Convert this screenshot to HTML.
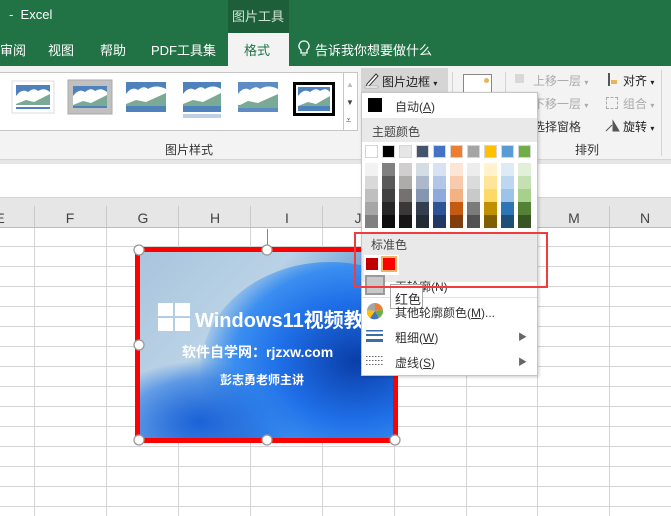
<!DOCTYPE html>
<html><head><meta charset="utf-8"><style>
*{margin:0;padding:0;box-sizing:border-box}
body{width:671px;height:516px;overflow:hidden;position:relative;background:#fff;font-family:"Liberation Sans","Noto Sans CJK SC",sans-serif;font-size:12px;color:#333}
.a{position:absolute}
.t{position:absolute;white-space:nowrap}
</style></head><body>
<div class="a" style="left:0;top:0;width:671px;height:66px;background:#217346"></div>
<div class="a" style="left:228px;top:0;width:61px;height:33px;background:#1d5f39"></div>
<div class="t" style="left:9px;top:7px;color:#fff;font-size:13px">-&nbsp; Excel</div>
<div class="t" style="left:232px;top:6px;color:#cfe3d6;font-size:13px">图片工具</div>
<div class="a" style="left:228px;top:33px;width:61px;height:33px;background:#f3f3f3"></div>
<div class="t" style="left:0;top:40px;color:#fff;font-size:13px">审阅</div>
<div class="t" style="left:48px;top:40px;color:#fff;font-size:13px">视图</div>
<div class="t" style="left:100px;top:40px;color:#fff;font-size:13px">帮助</div>
<div class="t" style="left:151px;top:40px;color:#fff;font-size:13px">PDF工具集</div>
<div class="t" style="left:244px;top:40px;color:#217346;font-size:13px">格式</div>
<svg class="a" style="left:298px;top:40px" width="12" height="18"><path d="M6 1a5 5 0 0 0-3 9v3h6v-3a5 5 0 0 0-3-9z" fill="none" stroke="#fff" stroke-width="1.3"/><path d="M4 15h4" stroke="#fff"/></svg>
<div class="t" style="left:315px;top:40px;color:#fff;font-size:13px">告诉我你想要做什么</div>
<div class="a" style="left:0;top:66px;width:671px;height:94px;background:#f3f3f3"></div>
<div class="a" style="left:0;top:72px;width:344px;height:59px;background:#fff;border:1px solid #c6c6c6;border-left:none"></div>
<div class="a" style="left:343px;top:72px;width:15px;height:59px;background:#fff;border:1px solid #c6c6c6"></div>
<div class="t" style="left:346px;top:80px;font-size:8px;color:#bbb">▲</div>
<div class="t" style="left:346px;top:98px;font-size:8px;color:#444">▼</div>
<div class="t" style="left:346px;top:115px;font-size:9px;color:#444">⩡</div>
<svg class="a" style="left:0;top:72px" width="343" height="58">
<g transform="translate(13,10)"><rect x="-1" y="-1" width="42" height="32" fill="#fff" stroke="#ddd"/><rect x="3" y="3" width="34" height="20" fill="#4f81bd"/><path d="M3 14q6-8 12-4q6-5 10-1q6-4 12 1v13H3z" fill="#fff"/><path d="M3 22l10-4 8 2 16-8v11H3z" fill="#7aa995"/><rect x="3" y="25" width="34" height="2" fill="#4f81bd"/></g>
<g transform="translate(70,10)"><rect x="-2" y="-2" width="44" height="34" fill="#c0c0c0" stroke="#aaa"/><rect x="3" y="4" width="34" height="20" fill="#4f81bd"/><path d="M3 14q6-8 12-4q6-5 10-1q6-4 12 1v13H3z" fill="#fff"/><path d="M3 23l10-4 8 2 16-8v11H3z" fill="#7aa995"/><rect x="3" y="24" width="34" height="2" fill="#4f81bd"/></g>
<g transform="translate(126,10)"><rect x="0" y="0" width="40" height="30" fill="#4f81bd"/><path d="M0 12q6-8 12-4q6-5 10-1q8-5 18 0v16H0z" fill="#fff"/><path d="M0 22l10-4 10 2 20-9v13H0z" fill="#7aa995"/></g>
<g transform="translate(183,10)"><rect x="0" y="0" width="38" height="30" fill="#4f81bd"/><path d="M0 12q6-8 12-4q6-5 10-1q8-5 16 0v16H0z" fill="#fff"/><path d="M0 22l10-4 10 2 18-9v13H0z" fill="#7aa995"/><rect x="0" y="32" width="38" height="4" fill="#bfd0e6"/></g>
<g transform="translate(238,10)"><rect x="0" y="0" width="40" height="30" fill="#5d8cc4"/><path d="M0 12q6-8 12-4q6-5 10-1q8-5 18 0v16H0z" fill="#fff"/><path d="M0 24l10-5 10 2 20-9v14H0z" fill="#7aa995"/><rect x="0" y="27" width="40" height="3" fill="#5d8cc4"/></g>
<g transform="translate(293,10)"><rect x="0" y="0" width="42" height="34" fill="#000"/><rect x="3" y="3" width="36" height="28" fill="#fff"/><rect x="5" y="5" width="32" height="24" fill="#4f81bd"/><path d="M5 14q6-8 12-4q6-5 10-1q6-4 10 1v14H5z" fill="#fff"/><path d="M5 24l10-4 8 2 14-8v10H5z" fill="#7aa995"/></g>
</svg>
<div class="t" style="left:165px;top:141px">图片样式</div>
<div class="a" style="left:0;top:159px;width:671px;height:1px;background:#d4d4d4"></div>
<div class="a" style="left:361px;top:68px;width:87px;height:24px;background:#d5d5d5"></div>
<svg class="a" style="left:364px;top:71px" width="16" height="18"><path d="M3 13l9-10 2 2-9 10-3 1z" fill="#fff" stroke="#333"/><rect x="1" y="15" width="13" height="2" fill="#fff" stroke="#888" stroke-width=".5"/></svg>
<div class="t" style="left:382px;top:73px;color:#222">图片边框 <span style="font-size:8px">▾</span></div>
<div class="a" style="left:452px;top:72px;width:1px;height:80px;background:#d4d4d4"></div>
<div class="a" style="left:463px;top:74px;width:29px;height:28px;background:#fff;border:1px solid #888"></div>
<div class="a" style="left:484px;top:78px;width:5px;height:5px;border-radius:50%;background:#e8b55c"></div>
<div class="a" style="left:505px;top:72px;width:1px;height:80px;background:#d4d4d4"></div>
<div class="a" style="left:515px;top:74px;width:9px;height:9px;background:#d8d8d8"></div>
<div class="t" style="left:533px;top:72px;color:#aaa">上移一层 <span style="font-size:8px">▾</span></div>
<div class="t" style="left:533px;top:95px;color:#aaa">下移一层 <span style="font-size:8px">▾</span></div>
<div class="t" style="left:533px;top:118px;color:#333">选择窗格</div>
<div class="a" style="left:608px;top:73px;width:2px;height:13px;background:#555"></div>
<div class="a" style="left:611px;top:80px;width:6px;height:4px;background:#e8b55c"></div>
<div class="t" style="left:623px;top:72px;color:#222">对齐 <span style="font-size:8px">▾</span></div>
<div class="a" style="left:606px;top:97px;width:12px;height:12px;border:1px dashed #aaa"></div>
<div class="t" style="left:623px;top:95px;color:#aaa">组合 <span style="font-size:8px">▾</span></div>
<svg class="a" style="left:604px;top:118px" width="16" height="14"><path d="M2 13l6-6M9 3l6 10H9z" fill="#555" stroke="#555"/></svg>
<div class="t" style="left:623px;top:118px;color:#222">旋转 <span style="font-size:8px">▾</span></div>
<div class="t" style="left:575px;top:141px">排列</div>
<div class="a" style="left:661px;top:70px;width:1px;height:86px;background:#d4d4d4"></div>
<div class="a" style="left:0;top:160px;width:671px;height:4px;background:#e6e6e6"></div>
<div class="a" style="left:0;top:197px;width:671px;height:1px;background:#d4d4d4"></div>
<svg class="a" style="left:0;top:198px" width="671" height="318">
<g stroke="#d4d4d4"><path d="M34.5 0v318M106.5 0v318M178.5 0v318M250.5 0v318M322.5 0v318M394.5 0v318M466.5 0v318M537.5 0v318M609.5 0v318"/>
<path d="M0 48.5h671M0 68.5h671M0 88.5h671M0 108.5h671M0 128.5h671M0 148.5h671M0 168.5h671M0 188.5h671M0 208.5h671M0 228.5h671M0 248.5h671M0 268.5h671M0 288.5h671M0 308.5h671"/></g>
<rect x="0" y="0" width="671" height="29" fill="#e6e6e6"/>
<path d="M0 29.5h671" stroke="#bbb"/>
<g stroke="#c8c8c8"><path d="M34.5 8v21M106.5 8v21M178.5 8v21M250.5 8v21M322.5 8v21M394.5 8v21M466.5 8v21M537.5 8v21M609.5 8v21"/></g>
<g font-size="14" fill="#444" text-anchor="middle" font-family="Liberation Sans"><text x="0" y="25">E</text><text x="70" y="25">F</text><text x="143" y="25">G</text><text x="215" y="25">H</text><text x="287" y="25">I</text><text x="358" y="25">J</text><text x="574" y="25">M</text><text x="645" y="25">N</text></g>
</svg>
<div class="a" style="left:267px;top:229px;width:1px;height:18px;background:#888"></div>
<div class="a" style="left:135px;top:247px;width:263px;height:196px;background:#ff0000"></div>
<div class="a" style="left:140px;top:252px;width:253px;height:186px;overflow:hidden;background:linear-gradient(135deg,#a9c4dc 0%,#b9d2e6 35%,#6fa4d8 55%,#1d5fc8 80%,#0b3c98 100%)">
<div class="a" style="left:60px;top:10px;width:260px;height:220px;border-radius:50%;background:radial-gradient(ellipse at 60% 45%,#0a3ea8 0%,#1f6fe8 35%,#3a8ef0 55%,rgba(60,140,240,0) 72%)"></div>
<div class="a" style="left:-40px;top:110px;width:200px;height:120px;border-radius:50%;background:radial-gradient(ellipse,#1b62d8 0%,rgba(40,120,230,.6) 50%,rgba(40,120,230,0) 72%)"></div>
<svg class="a" style="left:18px;top:51px" width="34" height="30"><rect x="0" y="0" width="15" height="13" fill="#fff"/><rect x="17" y="0" width="15" height="13" fill="#fff"/><rect x="0" y="15" width="15" height="13" fill="#fff"/><rect x="17" y="15" width="15" height="13" fill="#fff"/></svg>
<div class="t" style="left:55px;top:52px;color:#fff;font-size:20px;font-weight:bold">Windows11视频教</div>
<div class="t" style="left:42px;top:90px;color:#fff;font-size:14px;font-weight:bold">软件自学网：rjzxw.com</div>
<div class="t" style="left:80px;top:119px;color:#fff;font-size:12px;font-weight:bold">彭志勇老师主讲</div>
</div>
<svg class="a" style="left:128px;top:240px" width="280" height="210"><g fill="#fff" stroke="#999" stroke-width="1.3"><circle cx="11" cy="10" r="5"/><circle cx="139" cy="10" r="5"/><circle cx="11" cy="105" r="5"/><circle cx="11" cy="200" r="5"/><circle cx="139" cy="200" r="5"/><circle cx="267" cy="200" r="5"/></g></svg>
<div class="a" style="left:361px;top:92px;width:177px;height:284px;background:#fff;border:1px solid #c6c6c6;box-shadow:1px 1px 3px rgba(0,0,0,.2)"></div>
<div class="a" style="left:368px;top:98px;width:14px;height:14px;background:#000"></div>
<div class="t" style="left:395px;top:98px;color:#333">自动(<u>A</u>)</div>
<div class="a" style="left:362px;top:118px;width:175px;height:24px;background:#e9e9e9"></div>
<div class="t" style="left:372px;top:123px;color:#444">主题颜色</div>
<svg class="a" style="left:364px;top:144px" width="172" height="86" shape-rendering="crispEdges">
<g stroke="#d6d6d6" stroke-width="1">
<rect x="1.5" y="1.5" width="12" height="12" fill="#fff"/><rect x="18.5" y="1.5" width="12" height="12" fill="#000"/><rect x="35.5" y="1.5" width="12" height="12" fill="#e7e6e6"/><rect x="52.5" y="1.5" width="12" height="12" fill="#44546a"/><rect x="69.5" y="1.5" width="12" height="12" fill="#4472c4"/><rect x="86.5" y="1.5" width="12" height="12" fill="#ed7d31"/><rect x="103.5" y="1.5" width="12" height="12" fill="#a5a5a5"/><rect x="120.5" y="1.5" width="12" height="12" fill="#ffc000"/><rect x="137.5" y="1.5" width="12" height="12" fill="#5b9bd5"/><rect x="154.5" y="1.5" width="12" height="12" fill="#70ad47"/>
</g>
<g>
<g transform="translate(1,19)"><rect width="13" height="13" fill="#f2f2f2"/><rect y="13" width="13" height="13" fill="#d9d9d9"/><rect y="26" width="13" height="13" fill="#bfbfbf"/><rect y="39" width="13" height="13" fill="#a6a6a6"/><rect y="52" width="13" height="13" fill="#808080"/></g>
<g transform="translate(18,19)"><rect width="13" height="13" fill="#808080"/><rect y="13" width="13" height="13" fill="#595959"/><rect y="26" width="13" height="13" fill="#404040"/><rect y="39" width="13" height="13" fill="#262626"/><rect y="52" width="13" height="13" fill="#0d0d0d"/></g>
<g transform="translate(35,19)"><rect width="13" height="13" fill="#d0cece"/><rect y="13" width="13" height="13" fill="#aeabab"/><rect y="26" width="13" height="13" fill="#757171"/><rect y="39" width="13" height="13" fill="#3a3838"/><rect y="52" width="13" height="13" fill="#171616"/></g>
<g transform="translate(52,19)"><rect width="13" height="13" fill="#d6dce4"/><rect y="13" width="13" height="13" fill="#adb9ca"/><rect y="26" width="13" height="13" fill="#8496b0"/><rect y="39" width="13" height="13" fill="#333f4f"/><rect y="52" width="13" height="13" fill="#222a35"/></g>
<g transform="translate(69,19)"><rect width="13" height="13" fill="#d9e2f3"/><rect y="13" width="13" height="13" fill="#b4c6e7"/><rect y="26" width="13" height="13" fill="#8eaadb"/><rect y="39" width="13" height="13" fill="#2f5496"/><rect y="52" width="13" height="13" fill="#1f3864"/></g>
<g transform="translate(86,19)"><rect width="13" height="13" fill="#fbe5d5"/><rect y="13" width="13" height="13" fill="#f7cbac"/><rect y="26" width="13" height="13" fill="#f4b183"/><rect y="39" width="13" height="13" fill="#c55a11"/><rect y="52" width="13" height="13" fill="#833c0b"/></g>
<g transform="translate(103,19)"><rect width="13" height="13" fill="#ededed"/><rect y="13" width="13" height="13" fill="#dbdbdb"/><rect y="26" width="13" height="13" fill="#c9c9c9"/><rect y="39" width="13" height="13" fill="#7b7b7b"/><rect y="52" width="13" height="13" fill="#525252"/></g>
<g transform="translate(120,19)"><rect width="13" height="13" fill="#fff2cc"/><rect y="13" width="13" height="13" fill="#fee599"/><rect y="26" width="13" height="13" fill="#ffd966"/><rect y="39" width="13" height="13" fill="#bf9000"/><rect y="52" width="13" height="13" fill="#7f6000"/></g>
<g transform="translate(137,19)"><rect width="13" height="13" fill="#deebf6"/><rect y="13" width="13" height="13" fill="#bdd7ee"/><rect y="26" width="13" height="13" fill="#9dc3e6"/><rect y="39" width="13" height="13" fill="#2e75b5"/><rect y="52" width="13" height="13" fill="#1f4e79"/></g>
<g transform="translate(154,19)"><rect width="13" height="13" fill="#e2efd9"/><rect y="13" width="13" height="13" fill="#c5e0b3"/><rect y="26" width="13" height="13" fill="#a8d08d"/><rect y="39" width="13" height="13" fill="#538135"/><rect y="52" width="13" height="13" fill="#375623"/></g>
</g></svg>
<div class="a" style="left:362px;top:233px;width:175px;height:49px;background:#e9e9e9"></div>
<div class="t" style="left:371px;top:236px;color:#444">标准色</div>
<div class="a" style="left:364px;top:255px;width:35px;height:20px;background:#fff"></div>
<div class="a" style="left:366px;top:258px;width:12px;height:12px;background:#c00000"></div>
<div class="a" style="left:381px;top:256px;width:16px;height:16px;background:#ff0000;border:2px solid #f4b26a"></div>
<div class="a" style="left:365px;top:275px;width:20px;height:20px;background:#c8c8c8;border:2px solid #9a9a9a"></div>
<div class="t" style="left:395px;top:278px;color:#333">无轮廓(N)</div>
<div class="a" style="left:390px;top:284px;width:33px;height:25px;background:#fff;border:1px solid #aaa"></div>
<div class="t" style="left:395px;top:289px;color:#333;font-size:13px">红色</div>
<div class="a" style="left:354px;top:232px;width:194px;height:56px;border:2px solid #f03c3c"></div>
<div class="a" style="left:362px;top:297px;width:28px;height:1px;background:#e0e0e0"></div>
<div class="a" style="left:423px;top:297px;width:114px;height:1px;background:#e0e0e0"></div>
<svg class="a" style="left:366px;top:302px" width="18" height="18"><path d="M9 9L9 1A8 8 0 0 1 17 8z" fill="#ed7d31"/><path d="M9 9L17 8A8 8 0 0 1 13 16z" fill="#70ad47"/><path d="M9 9L13 16A8 8 0 0 1 4 16z" fill="#4472c4"/><path d="M9 9L4 16A8 8 0 0 1 1 8z" fill="#ffc000"/><path d="M9 9L1 8A8 8 0 0 1 9 1z" fill="#a5a5a5"/></svg>
<div class="t" style="left:395px;top:304px;color:#333">其他轮廓颜色(<u>M</u>)...</div>
<svg class="a" style="left:366px;top:329px" width="18" height="14"><rect y="1" width="17" height="1.5" fill="#3a6ea8"/><rect y="5" width="17" height="2" fill="#3a6ea8"/><rect y="10" width="17" height="3" fill="#3a6ea8"/></svg>
<div class="t" style="left:395px;top:329px;color:#333">粗细(<u>W</u>)</div>
<div class="t" style="left:518px;top:330px;color:#666;font-size:9px">▶</div>
<svg class="a" style="left:366px;top:355px" width="18" height="12"><path d="M0 1.5h17M0 5.5h17M0 9.5h17" stroke="#666" stroke-dasharray="1.5 1.5"/></svg>
<div class="t" style="left:395px;top:354px;color:#333">虚线(<u>S</u>)</div>
<div class="t" style="left:518px;top:355px;color:#666;font-size:9px">▶</div>
</body></html>
